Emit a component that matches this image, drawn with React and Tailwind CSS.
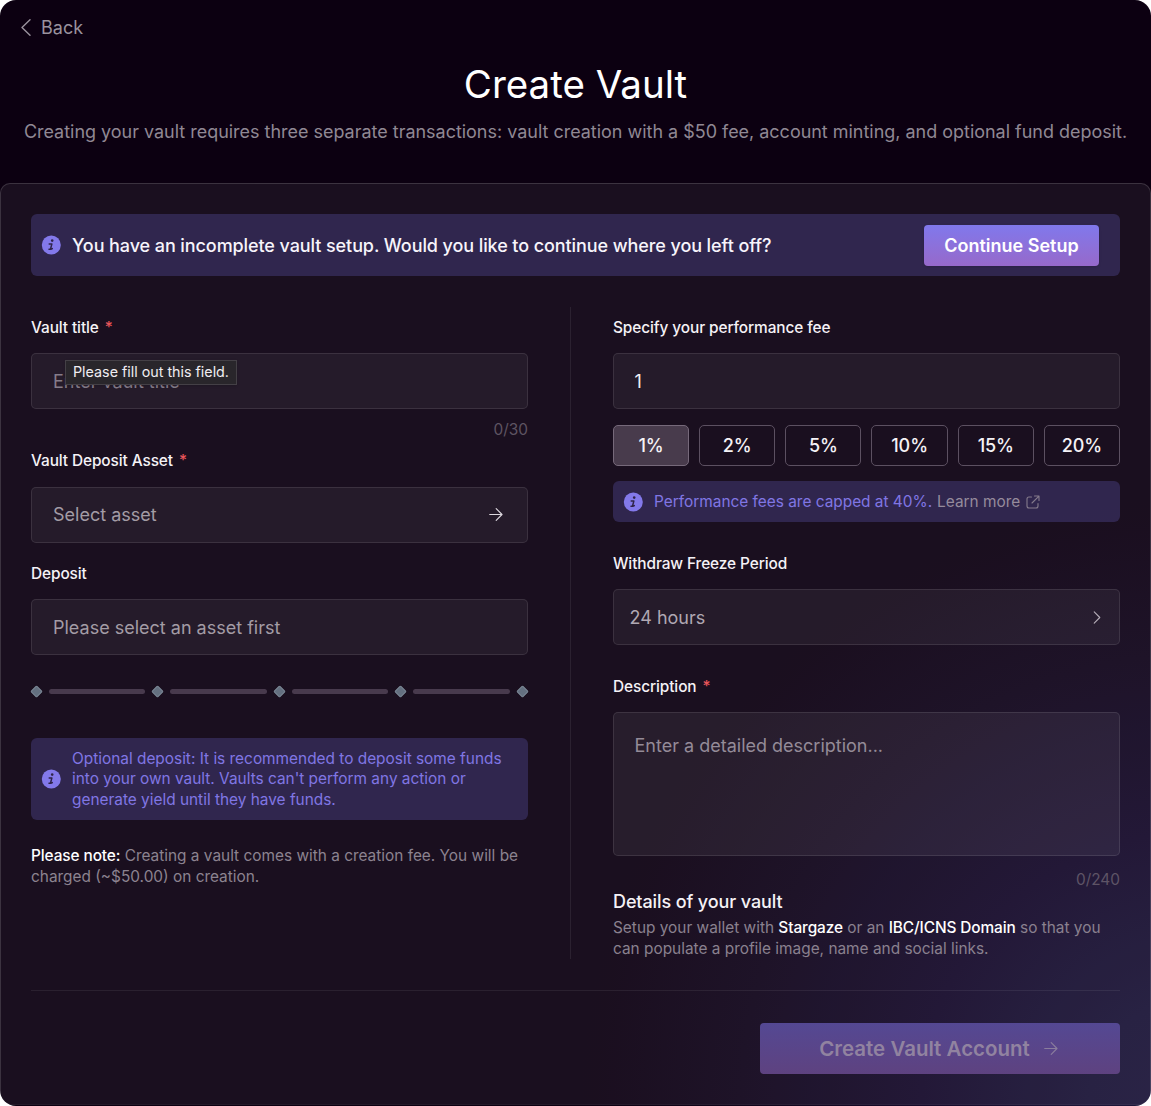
const InfoIcon = ({ className = "" }) => (
  <svg viewBox="0 0 20 20" className={"h-5 w-5 shrink-0 " + className}>
    <circle cx="10.3" cy="10" r="9.5" fill="#8379ea" />
    <circle cx="11.2" cy="5.6" r="1.3" fill="#2f2449" />
    <path d="M8.2 8.9h2.7l-1.3 4.9c-.1.6.4.7 1.7-.2M8 14.3h2" fill="none" stroke="#2f2449" strokeWidth="1.5" strokeLinecap="round" strokeLinejoin="round" />
  </svg>
);

const Arrow = ({ className = "" }) => (
  <svg viewBox="0 0 14 14" className={"h-3.5 w-3.5 shrink-0 " + className} fill="none" stroke="currentColor" strokeWidth="1.15" strokeLinecap="round" strokeLinejoin="round">
    <path d="M.7 6.5h12.2M7.2 .7l5.8 5.8-5.8 5.8" />
  </svg>
);

const Label = ({ children, required, className = "" }) => (
  <div className={"flex h-5 items-center gap-[6px] text-[15.4px] leading-5 font-medium tracking-[-0.006em] whitespace-nowrap text-[#f5f2f6] " + className}>
    <span>{children}</span>
    {required && <span className="text-[#e8555a]">*</span>}
  </div>
);

const field = "flex items-center justify-between rounded-[5px] border border-white/10 bg-white/5 text-lg";

const Tick = () => <div className="h-[9px] w-[9px] shrink-0 rotate-45 rounded-[1.5px] border border-[#7b8795] bg-[#647080]" />;
const Bar = () => <div className="h-[5px] flex-1 rounded-full bg-[#483a4d]" />;

export default function App() {
  const fees = ["1%", "2%", "5%", "10%", "15%", "20%"];
  return (
    <div className="h-[1106px] w-[1151px] bg-white font-[Inter,sans-serif]">
      <div className="flex h-full flex-col overflow-hidden rounded-[16px] bg-[#0c0011] bg-[radial-gradient(ellipse_620px_610px_at_1200px_1106px,#1e173c_0%,#1b1538_18%,#160a2b_45%,#10051b_74%,transparent_100%)]">
        <header className="flex h-[183px] shrink-0 flex-col">
          <div className="flex h-[54px] items-center gap-[10px] pl-[21px] text-lg text-[#9a929e]">
            <svg viewBox="0 0 10 17" className="h-[17px] w-[10px]" fill="none" stroke="currentColor" strokeWidth="1.4" strokeLinecap="round" strokeLinejoin="round">
              <path d="M9 .8 1 8.5l8 7.7" />
            </svg>
            <span className="pt-px">Back</span>
          </div>
          <h1 className="h-[58px] text-center text-[38.5px] leading-[60px] text-white">Create Vault</h1>
          <p className="mt-2 text-center text-[17.97px] leading-6 whitespace-nowrap text-[#908894]">
            Creating your vault requires three separate transactions: vault creation with a $50 fee, account minting, and optional fund deposit.
          </p>
        </header>

        <main className="flex h-[922px] shrink-0 flex-col rounded-[10px] border border-white/15 border-b-white/5 bg-white/6 px-[30px] pt-[30px]">
          <div className="flex h-[62px] w-[1089px] shrink-0 items-center rounded-[6px] bg-[#7a70e8]/24 pr-[21px] pl-[10px]">
            <InfoIcon />
            <span className="ml-[11px] pt-[2px] text-lg font-medium tracking-[-0.005em] whitespace-nowrap text-[#f7f4fb]">You have an incomplete vault setup. Would you like to continue where you left off?</span>
            <button className="ml-auto h-[41px] w-[175px] rounded-[4px] bg-linear-to-b from-[#8078ec] to-[#9669ca] pt-px text-lg font-semibold text-white shadow">Continue Setup</button>
          </div>

          <div className="mt-[31px] flex h-[652px] w-[1089px] shrink-0">
            <section className="flex w-[497px] flex-col [&>*]:shrink-0">
              <Label required className="mt-[10px] pt-px">Vault title</Label>
              <div className={field + " relative mt-4 h-14 pt-px pl-[21px] text-[#857c89]"}>
                <span>Enter vault title</span>
                <div className="absolute top-[6px] left-[33px] flex h-[25px] w-[172px] items-center justify-center border border-[#444046] bg-[#29262b] text-[14.3px] whitespace-nowrap text-[#f0edf1] shadow">
                  Please fill out this field.
                </div>
              </div>
              <div className="mt-[11px] h-5 text-right text-[15.4px] leading-5 text-[#5e5462]">0/30</div>
              <Label required className="mt-[11px]">Vault Deposit Asset</Label>
              <div className={field + " mt-4 h-14 pr-6 pl-[21px] text-[#a39ca5]"}>
                <span>Select asset</span>
                <Arrow className="text-[#ddd8df]" />
              </div>
              <Label className="mt-[20px] pt-px">Deposit</Label>
              <div className={field + " mt-4 h-14 pt-px pl-[21px] text-[#a39ca5]"}>Please select an asset first</div>
              <div className="mt-[31px] flex h-[10px] items-center gap-2 pr-px pl-[0.5px]">
                <Tick /><Bar /><Tick /><Bar /><Tick /><Bar /><Tick /><Bar /><Tick />
              </div>
              <div className="mt-[42px] flex h-[82px] items-center rounded-[6px] bg-[#7a70e8]/24 pl-[10px]">
                <InfoIcon />
                <p className="ml-[11px] pt-px text-[15.4px] leading-[20.5px] whitespace-nowrap text-[#8076e4]">
                  Optional deposit: It is recommended to deposit some funds<br />into your own vault. Vaults can't perform any action or<br />generate yield until they have funds.
                </p>
              </div>
              <p className="mt-[26px] text-[15.4px] leading-[20.5px] whitespace-nowrap text-[#8c8390]">
                <span className="font-medium tracking-[-0.006em] text-white">Please note:</span> Creating a vault comes with a creation fee. You will be<br />charged (~$50.00) on creation.
              </p>
            </section>

            <div className="mr-[42px] ml-[42px] w-px bg-white/8" />

            <section className="flex w-[507px] flex-col [&>*]:shrink-0">
              <Label className="mt-[10px] pt-px">Specify your performance fee</Label>
              <div className={field + " mt-4 h-14 pt-[2px] pl-[20.5px] text-[#f3eff5]"}>1</div>
              <div className="mt-4 grid grid-cols-6 gap-[10px]">
                {fees.map((f, i) => (
                  <button key={f} className={"h-[41px] rounded-[5px] border text-lg font-medium tracking-[-0.005em] text-[#f5f2f6] " + (i === 0 ? "border-[#76697a] bg-[#483b4c]" : "border-[#5c5061]")}>{f}</button>
                ))}
              </div>
              <div className="mt-[15px] flex h-[41px] items-center rounded-[6px] bg-[#7a70e8]/24 pl-[10px] text-[15.4px] whitespace-nowrap">
                <InfoIcon />
                <span className="ml-[11px] text-[#8076e4]">Performance fees are capped at 40%.</span>
                <span className="ml-[5px] text-[#958b9c]">Learn more</span>
                <svg viewBox="0 0 14 14" className="ml-[6px] h-3.5 w-3.5 text-[#857b8c]" fill="none" stroke="currentColor" strokeWidth="1.1" strokeLinecap="round" strokeLinejoin="round">
                  <path d="M5.5 2H3Q1 2 1 4v7q0 2 2 2h7q2 0 2-2V8.5M8.5 1H13v4.5M6 8l6.7-6.7" />
                </svg>
              </div>
              <Label className="mt-[31px] pt-px">Withdraw Freeze Period</Label>
              <div className={field + " mt-4 h-14 pt-px pr-[18px] pl-[15.5px] text-[#b0a8b3]"}>
                <span>24 hours</span>
                <svg viewBox="0 0 8 14" className="h-[13px] w-2 text-[#b5adb8]" fill="none" stroke="currentColor" strokeWidth="1.2" strokeLinecap="round" strokeLinejoin="round">
                  <path d="m1 1 6 6-6 6" />
                </svg>
              </div>
              <Label required className="mt-[31px] pt-px">Description</Label>
              <div className="mt-4 h-36 rounded-[5px] border border-white/10 bg-white/6 pt-5 pl-[20.5px] text-lg leading-[26px] text-[#948b98]">Enter a detailed description...</div>
              <div className="mt-[14px] h-5 text-right text-[15.4px] leading-5 text-[#5e5466]">0/240</div>
              <h2 className="h-6 text-lg leading-6 font-medium tracking-[-0.006em] text-[#f5f2f6]">Details of your vault</h2>
              <p className="mt-[4px] text-[15.4px] leading-[20.5px] whitespace-nowrap text-[#8a818f]">
                Setup your wallet with <span className="font-medium tracking-[-0.006em] text-white">Stargaze</span> or an <span className="font-medium tracking-[-0.006em] text-white">IBC/ICNS Domain</span> so that you<br />can populate a profile image, name and social links.
              </p>
            </section>
          </div>

          <div className="mt-[31px] h-px w-[1089px] shrink-0 bg-white/7" />
          <button className="mt-8 ml-auto flex h-[51px] w-[360px] shrink-0 items-center justify-center gap-[14px] rounded-[4px] bg-linear-to-b from-[#544893] to-[#5e4280] pt-px pr-[3px] text-[20.5px] font-semibold text-[#9183a0]">
            <span>Create Vault Account</span>
            <Arrow className="text-[#8a7d9d]" />
          </button>
        </main>
      </div>
    </div>
  );
}
